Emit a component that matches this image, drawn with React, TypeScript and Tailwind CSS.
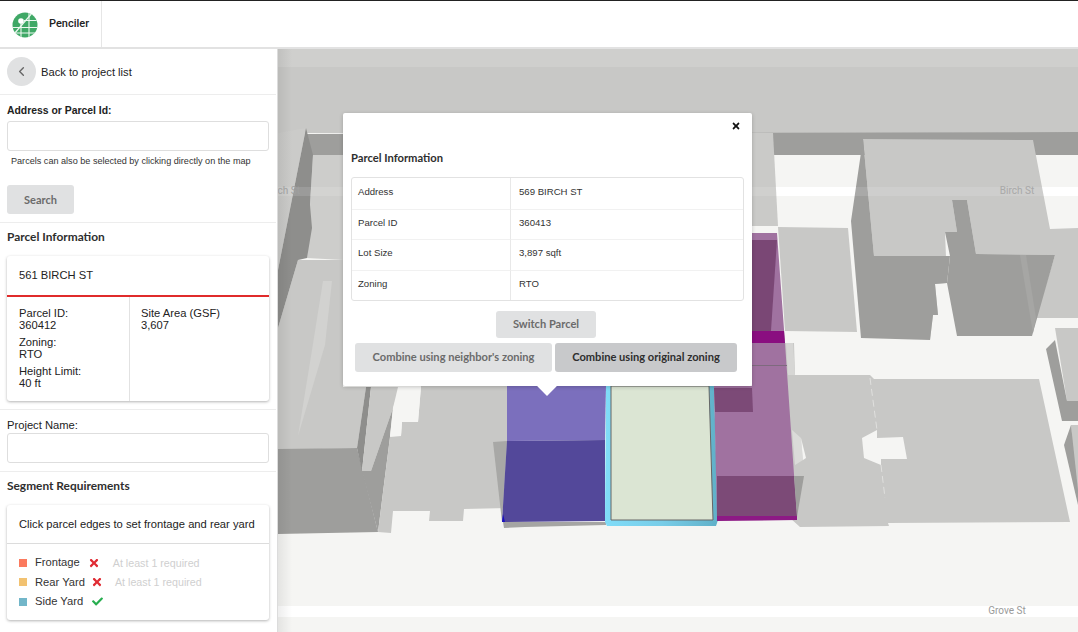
import React from "react";
import { ChevronLeft } from "lucide-react";
import { FaCheck, FaTimes } from "react-icons/fa";

const LIGHT = "#c8c8c6";
const DARK = "#9e9e9c";
const DARKER = "#8e8e8c";

const grayShapes: [string, string][] = [
  // top blocks
  ["278,49 1078,49 1078,133 278,133", LIGHT],
  ["278,49 1078,49 1078,67 278,67", "#cfcfcd"],
  ["306,134 1078,132 1078,155 306,155", DARK],
  // left block
  ["278,133 306,128 278,270", "#cbcbc9"],
  ["313,155 343,155 343,260 307,258", "#cdcdcb"],
  ["298,260 343,260 343,387 366,387 357,448 278,450 278,328", LIGHT],
  ["323,281 332,281 325,345 298,436 312,350", "#d2d2d0"],
  ["306,128 313,155 310,205 312,228 307,258 298,260 278,328 278,270", DARKER],
  ["278,449 357,448 378,532 278,534", DARK],
  ["366,387 371,387 362,471 357,448", DARKER],
  ["371,387 398,387 393,408 371,471 362,471", LIGHT],
  ["393,408 390,437 378,532 362,471 371,471", DARK],
  // block left of the parcels
  ["402,422 418,422 421,386 512,386 508,508 464,509 463,521 429,521 430,511 393,511 391,533 378,532 390,437 401,436", LIGHT],
  ["493,442 507,441 502,522", "#a8a8a6"],
  ["503,522 606,522 606,525 525,527 504,528", "#a5a5a3"],
  // top right blocks
  ["752,133 773,133 778,226 752,226", "#cacac8"],
  ["778,227 848,228 857,332 785,331", LIGHT],
  ["863,139 1033,140 1050,229 1078,228 1078,318 1036,318 1055,255 976,254 967,200 952,200 957,232 945,232 947,283 935,284 938,315 933,315 930,340 874,256", LIGHT],
  ["863,139 851,221 861,338 930,340 933,315 938,315 935,284 947,283 950,256 874,256", DARK],
  ["945,232 957,232 952,200 967,200 976,254 1055,255 1032,336 957,336 947,283 950,256", DARK],
  ["1020,255 1026,255 1036,318 1033,333", "#a6a6a4"],
  // bottom right blocks
  ["780,343 794,343 795,375 870,375 874,379 1039,379 1070,522 888,523 889,526 800,527 790,518", LIGHT],
  ["786,343 793,343 795,375 788,375", "#d6d6d4"],
  ["792,430 801,438 803,460 795,465", "#dbdbd9"],
  ["1055,328 1078,328 1078,401 1067,401", LIGHT],
  ["1055,340 1046,349 1062,421 1078,421 1078,401 1067,401", DARK],
  ["1071,425 1078,425 1078,500 1075,490", LIGHT],
  ["1071,425 1064,445 1078,505 1078,490", DARK],
];

const bgShapes = [
  "862,438 877,430 877,438 903,437 907,459 881,459 881,465 864,458",
  "801,438 806,458 803,460",
  "400,387 421,387 418,422 402,422 401,436 390,436 393,408",
];

const CityMap = () => (
  <svg className="absolute inset-0 h-full w-full" viewBox="278 49 800 583" preserveAspectRatio="none">
    <defs>
      <linearGradient id="parcelEdge" x1="0" x2="1" y1="0" y2="0">
        <stop offset="0" stopColor="#80dcf8" />
        <stop offset="0.5" stopColor="#78cde8" />
        <stop offset="1" stopColor="#60b0c8" />
      </linearGradient>
      <linearGradient id="sideShade" x1="0" x2="1" y1="0" y2="0">
        <stop offset="0" stopColor="#000" stopOpacity="0.07" />
        <stop offset="1" stopColor="#000" stopOpacity="0" />
      </linearGradient>
    </defs>
    <rect x="278" y="49" width="800" height="583" fill="#f5f5f3" />
    <rect x="278" y="187" width="800" height="9" fill="#ffffff" />
    <rect x="278" y="606" width="800" height="11" fill="#ffffff" />
    {grayShapes.map(([points, fill]) => (
      <polygon key={points} points={points} fill={fill} />
    ))}
    {bgShapes.map((points) => (
      <polygon key={points} points={points} fill="#f5f5f3" />
    ))}
    <path d="M870 378L877 430M881 465L885 498" stroke="#e0e0de" strokeWidth="1" strokeDasharray="7 4" fill="none" />
    <rect x="278" y="187" width="800" height="9" fill="#ffffff" fillOpacity="0.12" />

    {/* left neighbour */}
    <polygon points="507,386 606,386 605,440 507,441" fill="#7b6fbd" />
    <polygon points="507,441 605,440 605,521 502,522" fill="#53489a" />
    <polygon points="502,522 503,514 505,522" fill="#1a10c0" />

    {/* selected parcel */}
    <polygon points="606,386 714,386 718,520 716,526 607,526 605,522" fill="url(#parcelEdge)" />
    <polygon points="611,386 709,386 713,520 611,520" fill="#dbe5d3" stroke="#666" strokeWidth="1" />

    {/* right neighbour */}
    <polygon points="752,233 777,233 785,343 797,518 717,520 714,386 752,386" fill="#a072a0" />
    <polygon points="752,240 777,240 771,331 752,331" fill="#7a4775" />
    <polygon points="752,331 784,331 785,343 752,343" fill="#8a0e80" />
    <rect x="752" y="365" width="35" height="1" fill="#7e6a7e" />
    <polygon points="714,388 752,388 753,412 715,412" fill="#7c4a77" />
    <polygon points="717,476 794,476 797,516 717,516" fill="#7c4a77" />
    <polygon points="717,516 797,516 797,520 717,521" fill="#8d1a85" />
    <polygon points="794,476 804,476 797,517" fill={DARK} />

    <rect x="278" y="49" width="14" height="583" fill="url(#sideShade)" />

    <text x="300" y="194" textAnchor="end" fontSize="10" fill="#a0a0a0" className="font-['Roboto',sans-serif]">
      Birch St
    </text>
    <text x="1017" y="194" textAnchor="middle" fontSize="10" fill="#a8a8a8" className="font-['Roboto',sans-serif]">
      Birch St
    </text>
    <text x="1007" y="614" textAnchor="middle" fontSize="10" fill="#9a9a9a" className="font-['Roboto',sans-serif]">
      Grove St
    </text>
  </svg>
);

const Logo = () => (
  <svg width="26" height="26" viewBox="0 0 26 26" className="mt-[2px]">
    <defs>
      <clipPath id="logoClip">
        <circle cx="13" cy="13" r="12.5" />
      </clipPath>
    </defs>
    <circle cx="13" cy="13" r="12.5" fill="#3fa866" />
    <g clipPath="url(#logoClip)" stroke="#eef8f1" strokeWidth="1.1" fill="none">
      <path d="M17 0V26M9 11V26M0 15.5H26M0 21H26M12 8.5H26" />
      <path d="M2 22L21 0" strokeWidth="1.2" />
    </g>
    <circle cx="9" cy="9" r="2.8" fill="#ffffff" />
  </svg>
);

const Input = () => <input type="text" className="h-[30px] w-full rounded-[3px] border border-[#dedede] bg-white" />;

const Heading = ({ children }: { children: React.ReactNode }) => (
  <h2 className="font-['Lato',sans-serif] text-[11.9px] font-bold leading-[14px] text-[#2e2e2e]">{children}</h2>
);

const Card = ({ children, className }: { children: React.ReactNode; className: string }) => (
  <div className={`rounded-[3px] bg-white shadow-[0_1px_3px_rgba(0,0,0,0.3)] ${className}`}>{children}</div>
);

const Stat = ({ label, value }: { label: string; value: string }) => (
  <div className="mb-[5px] leading-[12px]">
    <div>{label}</div>
    <div>{value}</div>
  </div>
);

const Requirement = ({
  color,
  label,
  ok,
  iconClass,
  hintClass,
}: {
  color: string;
  label: string;
  ok?: boolean;
  iconClass: string;
  hintClass?: string;
}) => (
  <div className="flex h-[19.5px] items-center">
    <span className={`mr-2 h-2 w-2 ${color}`} />
    <span className="text-[#333]">{label}</span>
    {ok ? (
      <FaCheck className={`text-[11px] text-[#27ae4f] ${iconClass}`} />
    ) : (
      <FaTimes className={`text-[12px] text-[#e02b33] ${iconClass}`} />
    )}
    {!ok && <span className={`text-[10.7px] text-[#cfcfcf] ${hintClass}`}>At least 1 required</span>}
  </div>
);

const rows = [
  ["Address", "569 BIRCH ST"],
  ["Parcel ID", "360413"],
  ["Lot Size", "3,897 sqft"],
  ["Zoning", "RTO"],
];

const ParcelModal = () => (
  <div className="absolute left-[65px] top-[64px] h-[273px] w-[409px] rounded-[2px] bg-white px-2 shadow-[0_1px_4px_rgba(0,0,0,0.2)]">
    <span className="absolute bottom-[-7px] left-[197px] h-[14px] w-[14px] rotate-45 bg-white" />
    <div className="flex h-[26px] items-center justify-end pr-[3px]">
      <FaTimes className="text-[10px] text-[#111]" />
    </div>
    <div className="mt-[12px] font-['Lato',sans-serif] text-[11.2px] font-bold leading-[14px] text-[#2e2e2e]">
      Parcel Information
    </div>
    <table className="mt-[12px] w-[393px] border-separate border-spacing-0 rounded-[3px] border border-[#e2e2e2] text-[9.6px] text-[#333]">
      <tbody>
        {rows.map(([label, value], i) => (
          <tr key={label} className="h-[30.5px]">
            <td className={`w-[159px] border-r border-[#e8e8e8] pb-[3px] pl-[6px] ${i > 0 ? "border-t border-t-[#f1f1f1]" : ""}`}>
              {label}
            </td>
            <td className={`pb-[3px] pl-[8px] ${i > 0 ? "border-t border-t-[#f1f1f1]" : ""}`}>{value}</td>
          </tr>
        ))}
      </tbody>
    </table>
    <div className="relative z-10 font-['Lato',sans-serif] text-[11.1px] font-bold">
      <div className="mt-[10px] flex justify-center">
        <button className="mr-[3px] h-[27px] w-[100px] rounded-[3px] bg-[#e0e1e2] text-[#6b6b6b]">Switch Parcel</button>
      </div>
      <div className="mt-[5px] flex gap-[3px] pl-[4px]">
        <button className="h-[29px] w-[197px] rounded-[3px] bg-[#e0e1e2] text-[#6b6b6b]">Combine using neighbor's zoning</button>
        <button className="h-[29px] w-[182px] rounded-[3px] bg-[#c8c9cb] text-[#2e2e2e]">Combine using original zoning</button>
      </div>
    </div>
  </div>
);

const App: React.FC = () => {
  return (
    <div className="flex h-screen flex-col overflow-hidden border-t border-t-[#222] bg-white font-['Liberation_Sans',Arial,sans-serif] text-[11.2px] text-[#222]">
      <header className="flex h-[46px] shrink-0 bg-white">
        <div className="flex w-[102px] items-center border-r border-[#e6e6e6] pl-[12px]">
          <Logo />
          <span className="ml-[11px] font-['Roboto',sans-serif] text-[11px] font-medium text-[#222]">Penciler</span>
        </div>
      </header>
      <main className="flex min-h-0 flex-1 border-t-2 border-t-[#e2e2e2]">
        <aside className="flex w-[278px] shrink-0 flex-col border-r border-[#dcdcdc] bg-white pr-[1px]">
          <div className="flex h-[46px] shrink-0 items-center border-b border-[#ededed] pl-[7px]">
            <span className="flex h-[29px] w-[29px] items-center justify-center rounded-full bg-[#e0e1e2] text-[#666]">
              <ChevronLeft size={15} strokeWidth={2.2} />
            </span>
            <span className="ml-[5px] pt-[1px]">Back to project list</span>
          </div>
          <div className="h-[128px] shrink-0 border-b border-[#ededed] px-[7px] pt-[9px]">
            <label className="mb-[4px] block text-[10.4px] font-bold leading-[13px]">Address or Parcel Id:</label>
            <Input />
            <p className="mt-[5px] pl-[4px] text-[9.1px] leading-[11px] text-[#333]">
              Parcels can also be selected by clicking directly on the map
            </p>
            <button className="mt-[18px] h-[29px] w-[67px] rounded-[3px] bg-[#e0e1e2] pt-[1px] font-['Lato',sans-serif] text-[11px] font-bold text-[#6b6b6b]">
              Search
            </button>
          </div>
          <div className="h-[187px] shrink-0 border-b border-[#ededed] px-[7px] pt-[7px]">
            <Heading>Parcel Information</Heading>
            <Card className="mt-[12px] h-[145px]">
              <div className="flex h-[41px] items-center border-b-2 border-b-[#e02b2b] pl-[12px]">561 BIRCH ST</div>
              <div className="flex h-[104px]">
                <div className="w-[123px] border-r border-[#e2e2e2] pl-[12px] pt-[10px]">
                  <Stat label="Parcel ID:" value="360412" />
                  <Stat label="Zoning:" value="RTO" />
                  <Stat label="Height Limit:" value="40 ft" />
                </div>
                <div className="pl-[11px] pt-[10px]">
                  <Stat label="Site Area (GSF)" value="3,607" />
                </div>
              </div>
            </Card>
          </div>
          <div className="h-[62px] shrink-0 border-b border-[#ededed] px-[7px] pt-[9px]">
            <label className="mb-[1px] block leading-[13px]">Project Name:</label>
            <Input />
          </div>
          <div className="min-h-0 flex-1 px-[7px] pt-[7px]">
            <Heading>Segment Requirements</Heading>
            <Card className="mt-[12px] h-[115px]">
              <div className="flex h-[39px] items-center border-b border-[#dcdcdc] pl-[12px]">
                Click parcel edges to set frontage and rear yard
              </div>
              <div className="pl-[12px] pt-[9px]">
                <Requirement color="bg-[#fb7a5e]" label="Frontage" iconClass="ml-[8px]" hintClass="ml-[13px]" />
                <Requirement color="bg-[#f2c271]" label="Rear Yard" iconClass="ml-[6px]" hintClass="ml-[12px]" />
                <Requirement color="bg-[#72b6c9]" label="Side Yard" ok iconClass="ml-[9px]" />
              </div>
            </Card>
          </div>
        </aside>
        <section className="relative min-w-0 flex-1 overflow-hidden">
          <CityMap />
          <ParcelModal />
        </section>
      </main>
    </div>
  );
};

export default App;
